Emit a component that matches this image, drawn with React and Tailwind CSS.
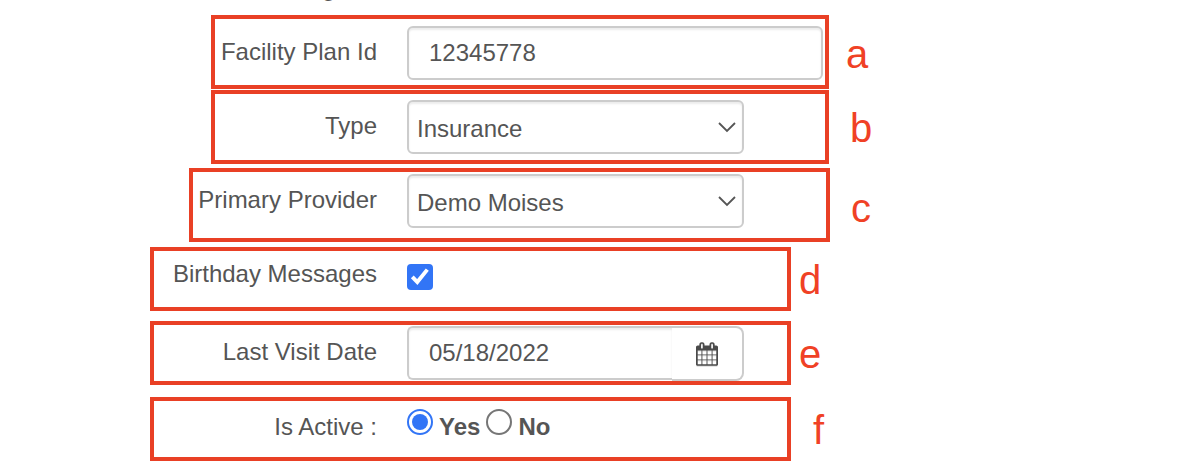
import { useState } from 'react';

const fieldClass =
  'h-[54px] rounded-md border-2 border-[#ccc] bg-white text-2xl leading-7 text-[#555] shadow-[inset_0_2px_2px_rgba(0,0,0,0.08)]';

function Callout({ letter, className, boxClass, letterClass, children }) {
  return (
    <div className={`flex items-center ${className}`}>
      <div className={`flex min-w-0 flex-1 items-start gap-[30px] self-stretch border-4 border-[#e94025] ${boxClass}`}>
        {children}
      </div>
      <span className={`text-[40px] leading-10 text-[#f04125] ${letterClass}`}>{letter}</span>
    </div>
  );
}

function SelectField({ id, value, onChange, options }) {
  return (
    <div className="relative w-[337px]">
      <select
        id={id}
        value={value}
        onChange={(e) => onChange(e.target.value)}
        className={`w-full appearance-none pt-1 pr-10 pl-2 ${fieldClass}`}
      >
        {options.map((option) => (
          <option key={option}>{option}</option>
        ))}
      </select>
      <svg
        className="pointer-events-none absolute top-[22px] right-2 h-3 w-[18px]"
        viewBox="0 0 18 12"
        fill="none"
        stroke="#555"
        strokeWidth="1.8"
        aria-hidden="true"
      >
        <path d="M1 1l8 8 8-8" />
      </svg>
    </div>
  );
}

function CalendarIcon() {
  return (
    <svg className="h-6 w-[22px] drop-shadow-[0_1px_0_#ddd]" viewBox="0 0 1664 1792" fill="#4a4a4a" aria-hidden="true">
      <path d="M128 1664h288v-288h-288v288zm352 0h320v-288h-320v288zm-352-352h288v-320h-288v320zm352 0h320v-320h-320v320zm-352-384h288v-288h-288v288zm736 736h320v-288h-320v288zm-384-736h320v-288h-320v288zm768 736h288v-288h-288v288zm-384-352h320v-320h-320v320zm-352-864v-288q0-13-9.5-22.5t-22.5-9.5h-64q-13 0-22.5 9.5t-9.5 22.5v288q0 13 9.5 22.5t22.5 9.5h64q13 0 22.5-9.5t9.5-22.5zm736 864h288v-320h-288v320zm-384-384h320v-288h-320v288zm384 0h288v-288h-288v288zm32-480v-288q0-13-9.5-22.5t-22.5-9.5h-64q-13 0-22.5 9.5t-9.5 22.5v288q0 13 9.5 22.5t22.5 9.5h64q13 0 22.5-9.5t9.5-22.5zm384-64v1280q0 52-38 90t-90 38h-1408q-52 0-90-38t-38-90v-1280q0-52 38-90t90-38h128v-96q0-66 47-113t113-47h64q66 0 113 47t47 113v96h384v-96q0-66 47-113t113-47h64q66 0 113 47t47 113v96h128q52 0 90 38t38 90z" />
    </svg>
  );
}

export default function App() {
  const [planId, setPlanId] = useState('12345778');
  const [type, setType] = useState('Insurance');
  const [provider, setProvider] = useState('Demo Moises');
  const [birthday, setBirthday] = useState(true);
  const [visitDate, setVisitDate] = useState('05/18/2022');
  const [active, setActive] = useState('Yes');

  return (
    <form className="bg-white pb-[11px] font-['Liberation_Sans',Arial,sans-serif] text-2xl leading-7 text-[#555]">
      <div className="flex h-[2px] items-end overflow-hidden pl-[322px]">
        <span className="leading-7">g</span>
      </div>

      <Callout letter="a" className="mt-[13px] ml-[211px] max-w-[657px]" boxClass="pt-[7px] pr-[2px] pb-[5px]" letterClass="w-[39px] pt-1 pl-[17px]">
        <label htmlFor="plan-id" className="w-[162px] shrink-0 pt-3 text-right whitespace-nowrap">Facility Plan Id</label>
        <input
          id="plan-id"
          type="text"
          value={planId}
          onChange={(e) => setPlanId(e.target.value)}
          className={`min-w-0 flex-1 px-5 ${fieldClass}`}
        />
      </Callout>

      <Callout letter="b" className="mt-px ml-[211px] max-w-[662px]" boxClass="py-[6px]" letterClass="w-[44px] pt-[2px] pl-[21px]">
        <label htmlFor="type" className="w-[162px] shrink-0 pt-3 text-right whitespace-nowrap">Type</label>
        <SelectField id="type" value={type} onChange={setType} options={['Insurance', 'Self Pay']} />
      </Callout>

      <Callout letter="c" className="mt-1 ml-[189px] max-w-[685px]" boxClass="pt-[2px] pb-[10px]" letterClass="w-[44px] pt-[6px] pl-[21px]">
        <label htmlFor="provider" className="w-[184px] shrink-0 pt-3 text-right whitespace-nowrap">Primary Provider</label>
        <SelectField id="provider" value={provider} onChange={setProvider} options={['Demo Moises', 'None']} />
      </Callout>

      <Callout letter="d" className="mt-[5px] ml-[150px] max-w-[673px]" boxClass="pt-[9px] pb-[17px]" letterClass="w-8 pt-[2px] pl-2">
        <label htmlFor="birthday" className="w-[223px] shrink-0 pb-[2px] text-right whitespace-nowrap">Birthday Messages</label>
        <span className="relative mt-1 size-[26px]">
          <input
            id="birthday"
            type="checkbox"
            checked={birthday}
            onChange={(e) => setBirthday(e.target.checked)}
            className="block size-[26px] appearance-none rounded border-2 border-[#767676] checked:border-[#3275f6] checked:bg-[#3275f6]"
          />
          {birthday && (
            <svg
              className="pointer-events-none absolute inset-0 size-[26px]"
              viewBox="0 0 26 26"
              fill="none"
              stroke="#fff"
              strokeWidth="3.9"
              aria-hidden="true"
            >
              <path d="M5.3 12.8l5 5.2L20.3 5.6" />
            </svg>
          )}
        </span>
      </Callout>

      <Callout letter="e" className="mt-[10px] ml-[150px] max-w-[673px]" boxClass="pt-px" letterClass="w-8 pt-[2px] pl-2">
        <label htmlFor="visit-date" className="w-[223px] shrink-0 pt-3 text-right whitespace-nowrap">Last Visit Date</label>
        <div className="flex w-[337px]">
          <input
            id="visit-date"
            type="text"
            value={visitDate}
            onChange={(e) => setVisitDate(e.target.value)}
            className={`min-w-0 flex-1 rounded-r-none border-r-0 px-5 ${fieldClass}`}
          />
          <button
            type="button"
            aria-label="Open calendar"
            className="flex h-[55px] w-[72px] items-center justify-center rounded-r-lg border-2 border-l-0 border-[#ccc] bg-white"
          >
            <CalendarIcon />
          </button>
        </div>
      </Callout>

      <Callout letter="f" className="mt-3 ml-[150px] max-w-[685px]" boxClass="pt-2 pb-4" letterClass="w-[44px] pt-[2px] pl-[22px]">
        <span id="active-label" className="w-[223px] shrink-0 pt-1 text-right whitespace-nowrap">Is Active :</span>
        <div role="radiogroup" aria-labelledby="active-label" className="flex gap-[6px]">
          {['Yes', 'No'].map((option) => (
            <label key={option} className="flex items-start gap-[6px] font-bold">
              <input
                type="radio"
                name="active"
                value={option}
                checked={active === option}
                onChange={() => setActive(option)}
                className="size-[26px] appearance-none rounded-full border-2 border-[#767676] bg-white bg-clip-content p-[3px] checked:border-[#3275f6] checked:bg-[#3275f6]"
              />
              <span className="pt-1">{option}</span>
            </label>
          ))}
        </div>
      </Callout>
    </form>
  );
}
